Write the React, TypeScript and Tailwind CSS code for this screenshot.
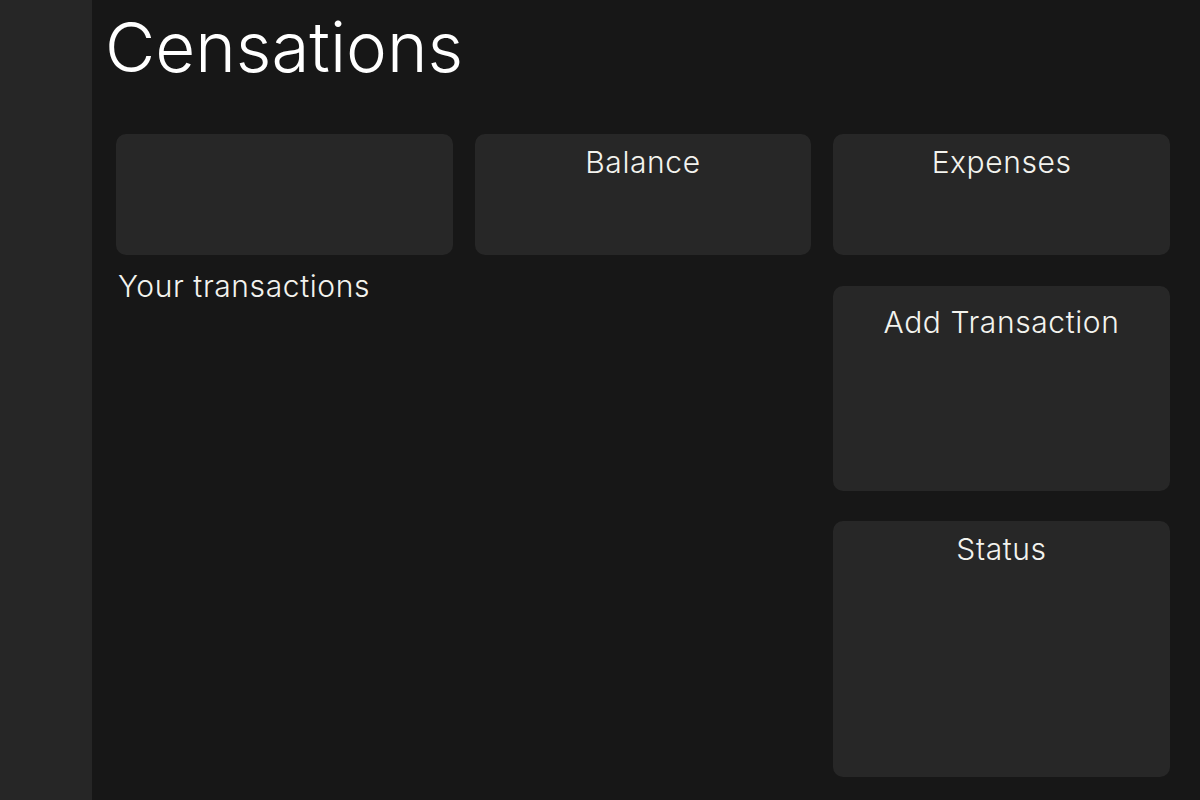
const Card = ({ title, className }: { title?: string; className: string }) => (
  <div className={`rounded-[10px] bg-[#272727] text-center ${className}`}>
    {title && <h2 className="text-[30px] leading-[36px] font-light tracking-[0.02em] text-[#f3f3ee]">{title}</h2>}
  </div>
);

export default function App() {
  return (
    <div className="flex h-screen font-['Inter',sans-serif] text-[#f3f3ee]">
      <aside className="w-[92px] shrink-0 bg-[#262626]" />

      <main className="flex-1 bg-[#171717] pl-[24px] pr-[30px]">
        <h1 className="mt-[13px] ml-[-11px] text-[69px] leading-none font-light text-white">Censations</h1>

        <div className="mt-[52px] grid grid-cols-3 gap-x-[22px]">
          <Card className="h-[121px]" />
          <Card title="Balance" className="h-[121px] pt-[10px]" />
          <Card title="Expenses" className="h-[121px] pt-[10px]" />
        </div>

        <div className="flex gap-[22px]">
          <div className="flex-1">
            <h3 className="mt-[13px] ml-[2px] text-[30px] leading-[36px] font-light tracking-[0.02em]">Your transactions</h3>
          </div>
          <div className="flex w-[337px] flex-col gap-[30px] pt-[31px]">
            <Card title="Add Transaction" className="h-[205px] pt-[18px]" />
            <Card title="Status" className="h-[256px] pt-[10px]" />
          </div>
        </div>
      </main>
    </div>
  );
}
